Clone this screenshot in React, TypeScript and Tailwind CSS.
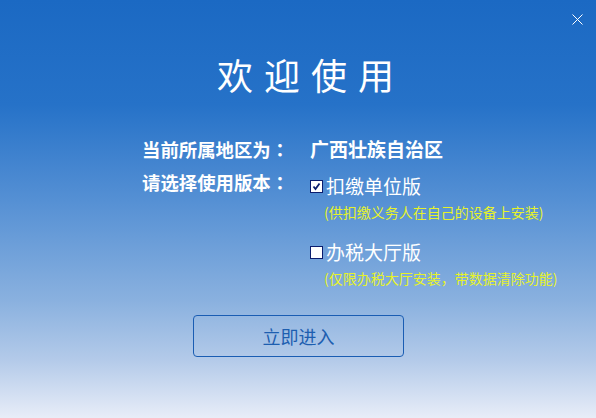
import React, { useState } from 'react'

const font = '"Microsoft YaHei", "Noto Sans CJK SC", "Noto Sans", sans-serif'
const tcFont = '"Noto Sans CJK TC", sans-serif'
const krFont = '"Noto Sans CJK KR", sans-serif'

function Check({ checked, onClick }: { checked: boolean; onClick: () => void }) {
  return (
    <button
      onClick={onClick}
      className="w-[13px] h-[13px] bg-white border border-[#0b1d6e] flex items-center justify-center shrink-0"
    >
      {checked && (
        <svg width="9" height="9" viewBox="0 0 9 9">
          <path d="M1.5 4.5 L3.5 7 L7.5 1.5" stroke="#0b1d6e" strokeWidth="1.8" fill="none" />
        </svg>
      )}
    </button>
  )
}

export default function App() {
  const [version, setVersion] = useState<'unit' | 'hall'>('unit')

  return (
    <div
      className="w-[596px] h-[418px] relative overflow-hidden bg-[linear-gradient(to_bottom,#1b69c3_0%,#2672c8_25%,#5590d4_48%,#8ab1df_72%,#b3cae9_86%,#e8edf8_100%)]"
      style={{ fontFamily: font }}
    >
      {/* 關閉按鈕 */}
      <button className="absolute right-[13px] top-[14px] w-[11px] h-[11px]">
        <svg width="11" height="11" viewBox="0 0 11 11">
          <path d="M0.5 0.5 L10.5 10.5 M10.5 0.5 L0.5 10.5" stroke="white" strokeWidth="1" />
        </svg>
      </button>

      <div className="flex flex-col">
        <h1 className="mt-[52px] h-[44px] leading-[44px] text-[36px] text-white text-center tracking-[11px] pl-[26px]">
          欢迎使用
        </h1>

        <div className="mt-[40px] ml-[142px] grid grid-cols-[168px_1fr]">
          <div className="text-[18.4px] font-bold text-white leading-[26px]">
            当前所属地区为<span style={{ fontFamily: tcFont }}>：</span>
          </div>
          <div className="text-[19px] font-bold text-white leading-[26px]">广西壮族自治区</div>

          <div className="mt-[7px] text-[18.4px] font-bold text-white leading-[26px]">
            请选择使用版本<span style={{ fontFamily: tcFont }}>：</span>
          </div>
          <div className="mt-[11px] flex flex-col">
            <div className="flex items-center gap-[3px] h-[26px]">
              <Check checked={version === 'unit'} onClick={() => setVersion('unit')} />
              <span className="text-[19px] text-white leading-[26px]">扣缴单位版</span>
            </div>
            <div className="mt-[3px] ml-[14px] text-[14px] text-[#e6f22a] leading-[20px]">
              (供扣缴义务人在自己的设备上安装)
            </div>
            <div className="mt-[17px] flex items-center gap-[3px] h-[26px]">
              <Check checked={version === 'hall'} onClick={() => setVersion('hall')} />
              <span className="text-[19px] text-white leading-[26px]">办税大厅版</span>
            </div>
            <div className="mt-[3px] ml-[14px] text-[14px] text-[#e6f22a] leading-[20px]">
              (仅限办税大厅安装<span style={{ fontFamily: krFont }}>，</span>带数据清除功能)
            </div>
          </div>
        </div>

        <button className="mt-[27px] ml-[193px] w-[211px] h-[42px] rounded-[4px] border border-[#1a5db3] text-[18px] text-[#1d5eb0]">
          立即进入
        </button>
      </div>
    </div>
  )
}
